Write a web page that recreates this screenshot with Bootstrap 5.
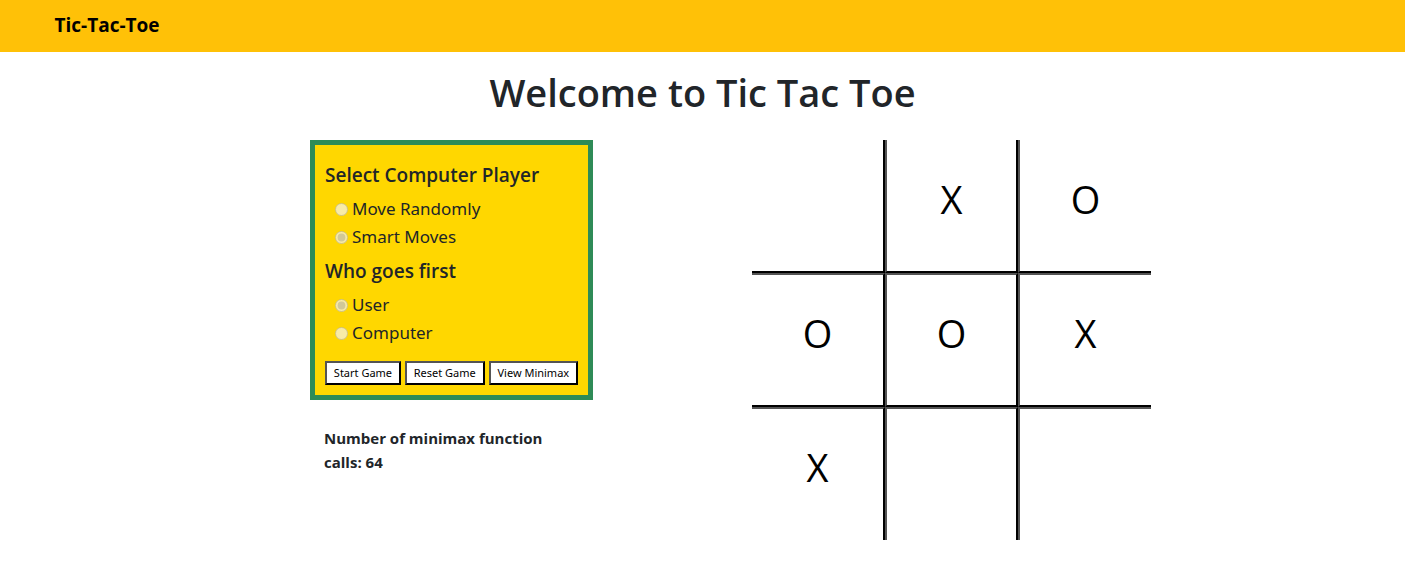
<!DOCTYPE html>
<html lang="en">
<head>
<meta charset="utf-8">
<meta name="viewport" content="width=device-width, initial-scale=1">
<title>Tic-Tac-Toe</title>
<link href="https://cdn.jsdelivr.net/npm/bootstrap@5.3.0/dist/css/bootstrap.min.css" rel="stylesheet">
<style>
  body { font-family: "Open Sans", "Noto Sans", sans-serif; }
  .site-bar { min-height: 52px; }
  .site-bar .navbar-brand { font-size: 19px; line-height: 20px; color: #000; padding: 4px 0 6px; }
  .page-title { font-size: 38px; line-height: 48px; }
  .game-area { max-width: 897px; }
  .side-panel { width: 339px; }
  .options { background: gold; border: 5px solid seagreen; padding: 18px 10px 10px; }
  .options legend { font-size: 19px; line-height: 24px; }
  .choice { font-family: "Noto Sans", sans-serif; font-size: 17px; line-height: 28px; margin-left: 10px; }
  .choice input { width: 13px; height: 13px; margin: 0; }
  .actions { margin-top: 14px; }
  .game-btn { background: #fff; color: #000; border: 2px outset #000; font-family: "Noto Sans", sans-serif; font-size: 11px; line-height: 20px; padding: 0; }
  .calls { font-size: 15px; line-height: 24px; margin: 26px 14px 0; }
  .board { display: grid; grid-template: repeat(3, 1fr) / repeat(3, 1fr); width: 399px; height: 400px; max-width: 100%; }
  .board button { background: #fff; color: #000; border: 0 outset #000; font-size: 38px; line-height: 48px; padding: 0 0 14px; }
  .board button:not(:nth-child(3n)) { border-right-width: 2px; }
  .board button:not(:nth-child(3n+1)) { border-left-width: 2px; }
  .board button:nth-child(-n+6) { border-bottom-width: 2px; }
  .board button:nth-child(n+4) { border-top-width: 2px; }
</style>
</head>
<body>
<nav class="navbar site-bar bg-warning py-0">
  <div class="container">
    <a class="navbar-brand fw-bold" href="#">Tic-Tac-Toe</a>
  </div>
</nav>
<main class="container">
  <h1 class="page-title text-center fw-semibold mt-3 mb-4">Welcome to Tic Tac Toe</h1>
  <div class="game-area mx-auto d-flex flex-wrap justify-content-between align-items-start gap-4">
    <section class="side-panel ps-lg-5 pe-lg-0">
      <div class="ms-lg-2">
        <form class="options">
          <fieldset>
            <legend class="fw-semibold mb-2">Select Computer Player</legend>
            <div class="choice d-flex align-items-center gap-1"><input type="radio" name="mode" id="random" disabled><label for="random">Move Randomly</label></div>
            <div class="choice d-flex align-items-center gap-1"><input type="radio" name="mode" id="smart" checked disabled><label for="smart">Smart Moves</label></div>
          </fieldset>
          <fieldset class="pt-2">
            <legend class="fw-semibold mb-2">Who goes first</legend>
            <div class="choice d-flex align-items-center gap-1"><input type="radio" name="first" id="user" checked disabled><label for="user">User</label></div>
            <div class="choice d-flex align-items-center gap-1"><input type="radio" name="first" id="computer" disabled><label for="computer">Computer</label></div>
          </fieldset>
          <div class="actions d-flex gap-1">
            <button class="game-btn flex-fill" type="button">Start Game</button>
            <button class="game-btn flex-fill" type="button">Reset Game</button>
            <button class="game-btn flex-fill" type="button">View Minimax</button>
          </div>
        </form>
        <p class="fw-bold calls">Number of minimax function calls: 64</p>
      </div>
    </section>
    <section class="board" aria-label="Game board">
      <button type="button" aria-label="Empty"></button>
      <button type="button">X</button>
      <button type="button">O</button>
      <button type="button">O</button>
      <button type="button">O</button>
      <button type="button">X</button>
      <button type="button">X</button>
      <button type="button" aria-label="Empty"></button>
      <button type="button" aria-label="Empty"></button>
    </section>
  </div>
</main>
<script src="https://cdn.jsdelivr.net/npm/bootstrap@5.3.0/dist/js/bootstrap.bundle.min.js"></script>
</body>
</html>
